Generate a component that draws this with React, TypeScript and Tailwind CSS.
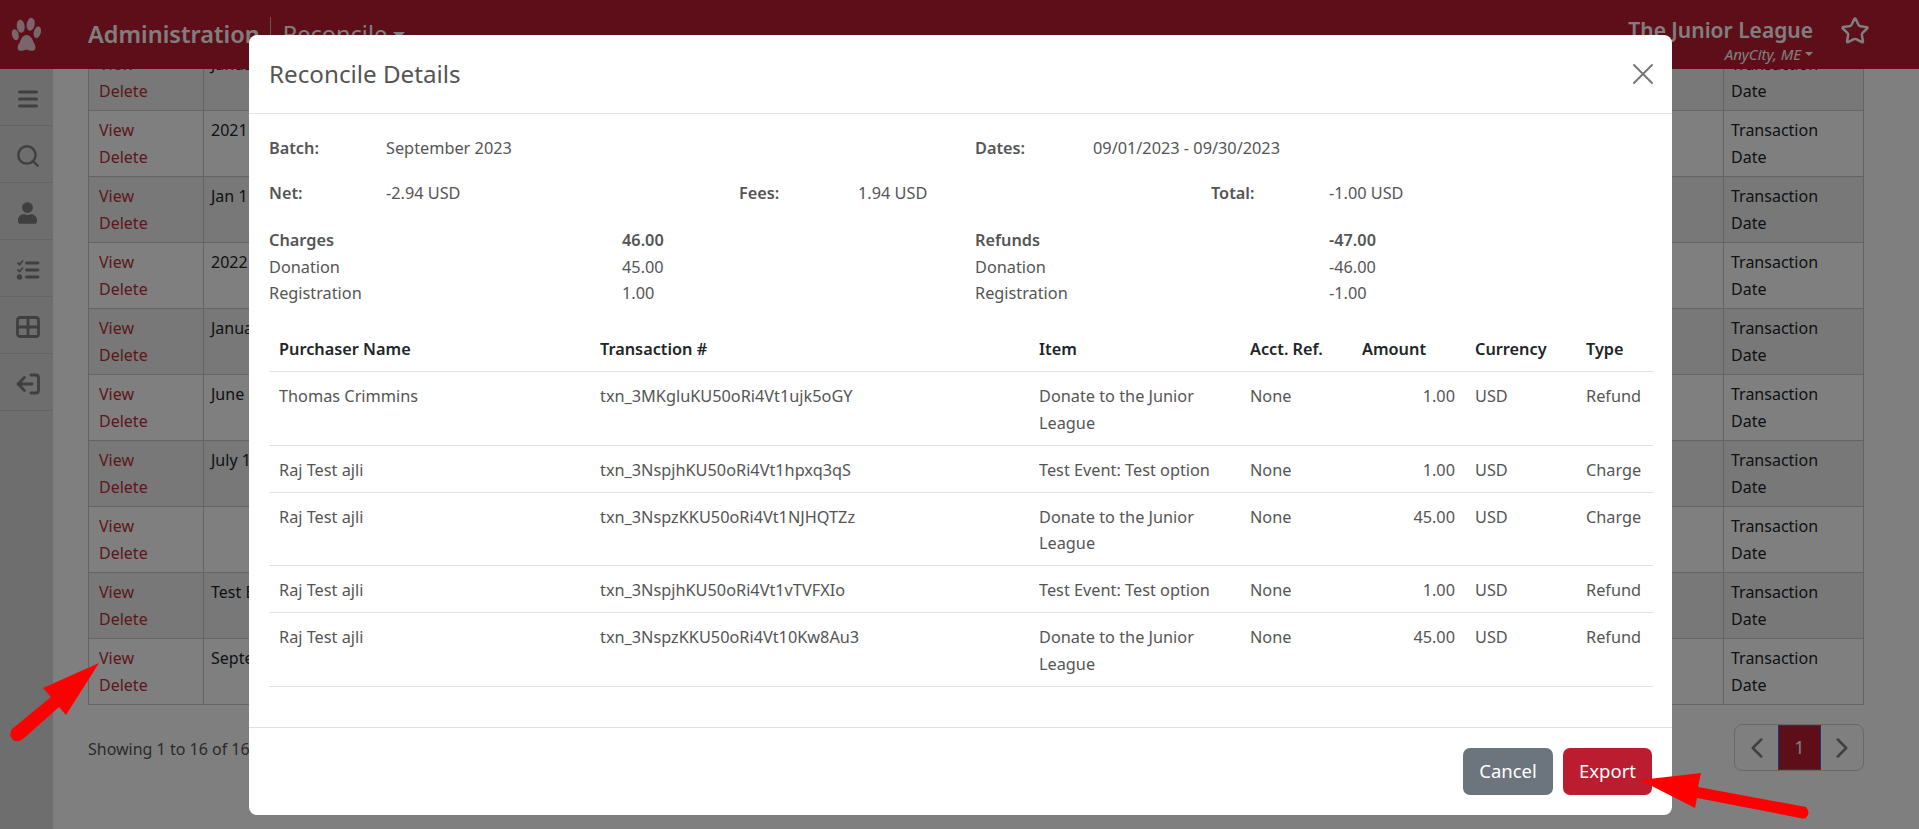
import { FaUser } from "react-icons/fa";
import { ChevronLeft, ChevronRight, Search, X, Star } from "lucide-react";

const font = "font-['Noto_Sans','Open_Sans',sans-serif]";

const pageRows = ["January 2021", "2021 Q1", "Jan 1 2022", "2022 Q1", "January 2023", "June 2023", "July 1 2023", "", "Test Batch", "September 2023"];

const txns = [
  ["Thomas Crimmins", "txn_3MKgluKU50oRi4Vt1ujk5oGY", "Donate to the Junior League", "None", "1.00", "USD", "Refund"],
  ["Raj Test ajli", "txn_3NspjhKU50oRi4Vt1hpxq3qS", "Test Event: Test option", "None", "1.00", "USD", "Charge"],
  ["Raj Test ajli", "txn_3NspzKKU50oRi4Vt1NJHQTZz", "Donate to the Junior League", "None", "45.00", "USD", "Charge"],
  ["Raj Test ajli", "txn_3NspjhKU50oRi4Vt1vTVFXIo", "Test Event: Test option", "None", "1.00", "USD", "Refund"],
  ["Raj Test ajli", "txn_3NspzKKU50oRi4Vt10Kw8Au3", "Donate to the Junior League", "None", "45.00", "USD", "Refund"],
];

function SideItem({ children }: { children: React.ReactNode }) {
  return <div className="h-[57px] pt-[3px] pl-[2px] flex items-center justify-center border-b border-[#c8c8c8] text-[#7f7f7f]">{children}</div>;
}

function Label({ children, w }: { children: React.ReactNode; w: string }) {
  return <span className={`font-semibold ${w}`}>{children}</span>;
}

export default function App() {
  return (
    <div className={`relative h-[829px] w-[1919px] overflow-hidden bg-white text-[16px] leading-[27px] text-[#212529] ${font}`}>
      <header className="relative z-10 h-[69px] bg-[#bc1c30] flex items-center text-white">
        <div className="w-[88px] h-[69px] shrink-0">
          <svg viewBox="0 0 50 69" width="50" height="69" fill="#f4ccd4">
            <ellipse cx="15.3" cy="34.7" rx="3.4" ry="5.6" transform="rotate(-15 15.3 34.7)" />
            <ellipse cx="20.7" cy="26.3" rx="4" ry="6.5" transform="rotate(-8 20.7 26.3)" />
            <ellipse cx="30.7" cy="24.3" rx="4" ry="6.5" transform="rotate(10 30.7 24.3)" />
            <ellipse cx="37.3" cy="32.3" rx="3.5" ry="6" transform="rotate(15 37.3 32.3)" />
            <path d="M26.5 35 C30 35 32 38 33.5 42 C35 45 36 47 35 49.5 C34 51.5 30 51 26.5 49.5 C23 51 19 51.5 18 49.5 C17 47 18 45 20 42 C21.5 38 23 35 26.5 35 Z" />
          </svg>
        </div>
        <span className="text-[23.5px] font-semibold">Administration</span>
        <span className="ml-[10px] h-[36px] w-px bg-white/60" />
        <span className="ml-[12px] text-[23.5px] flex items-center gap-[6px]">
          Reconcile
          <span className="w-0 h-0 border-x-[6px] border-x-transparent border-t-[6px] border-t-white" />
        </span>
        <div className="ml-auto flex flex-col items-end pr-[106px] mt-[10px]">
          <span className="text-[21px] leading-[28px] font-semibold">The Junior League</span>
          <span className="text-[15px] leading-[20px] italic flex items-center gap-1">
            AnyCity, ME
            <span className="w-0 h-0 border-x-[4px] border-x-transparent border-t-[4px] border-t-white" />
          </span>
        </div>
        <Star className="absolute left-[1840px] top-[16px] w-[30px] h-[30px]" strokeWidth={2} />
      </header>

      <div className="flex h-[760px]">
        <aside className="w-[53px] shrink-0 bg-[#dcdcdc]">
          <SideItem>
            <svg viewBox="0 0 20 18" className="w-[20px] h-[18px]" fill="none" stroke="#7f7f7f" strokeWidth="3" strokeLinecap="round">
              <path d="M1.5 2h17M1.5 9h17M1.5 16h17" />
            </svg>
          </SideItem>
          <SideItem><Search className="w-[26px] h-[26px] text-[#7f7f7f]" strokeWidth={2.2} /></SideItem>
          <SideItem><FaUser className="w-[19px] h-[22px] text-[#7f7f7f]" /></SideItem>
          <SideItem>
            <svg viewBox="0 0 24 24" className="w-[24px] h-[24px]" fill="none" stroke="#7f7f7f" strokeWidth="2.8" strokeLinecap="round" strokeLinejoin="round">
              <path d="M2 5l1.6 1.6L6.5 3M2 12l1.6 1.6L6.5 10" strokeWidth="1.8" />
              <path d="M10.5 5h11.5M10.5 12h11.5M10.5 19h11.5" />
              <circle cx="3.5" cy="19" r="1.3" fill="#7f7f7f" />
            </svg>
          </SideItem>
          <SideItem>
            <svg viewBox="0 0 24 22" className="w-[24px] h-[22px]" fill="none" stroke="#7f7f7f" strokeWidth="2.8" strokeLinejoin="round">
              <rect x="1.5" y="1.5" width="21" height="19" rx="2.5" />
              <path d="M1.5 11h21M12 1.5v19" />
            </svg>
          </SideItem>
          <SideItem>
            <svg viewBox="0 0 24 22" className="w-[24px] h-[22px]" fill="none" stroke="#7f7f7f" strokeWidth="2.8" strokeLinecap="round" strokeLinejoin="round">
              <path d="M15 2h5a2.5 2.5 0 0 1 2.5 2.5v13a2.5 2.5 0 0 1-2.5 2.5h-5" />
              <path d="M2 11h14M8.5 4.5L2 11l6.5 6.5" />
            </svg>
          </SideItem>
        </aside>

        <main className="flex-1 pl-[35px] pr-[55px] overflow-hidden">
          <table className="-mt-[25px] w-[1776px] border-collapse table-fixed">
            <tbody>
              {pageRows.map((r, i) => (
                <tr key={i} className={i % 2 === 0 ? "bg-[#f0f0f0]" : "bg-white"}>
                  <td className="w-[115px] h-[66px] border border-[#c8c8c8] px-[10px] pt-[6px] pb-[5px] align-top text-[#b83038]">
                    <div>View</div>
                    <div>Delete</div>
                  </td>
                  <td className="border border-[#c8c8c8] px-[7px] pt-[6px] pb-[5px] align-top">{r}</td>
                  <td className="w-[140px] border border-[#c8c8c8] px-[7px] pt-[6px] pb-[5px] align-top">Transaction Date</td>
                </tr>
              ))}
            </tbody>
          </table>
          <div className="flex items-center justify-between mt-[19px] h-[47px] w-[1776px]">
            <span className="text-[#555] pt-[4px]">Showing 1 to 16 of 16 entries</span>
            <div className="flex h-[47px] w-[130px] border border-[#d0d0d0] rounded-[8px] overflow-hidden text-[#808080]">
              <span className="w-[44px] flex items-center justify-center"><ChevronLeft className="w-[34px] h-[34px]" strokeWidth={1.8} /></span>
              <span className="w-[43px] flex items-center justify-center bg-[#bc1c30] text-white text-[18px] border border-[#1c78ff]">1</span>
              <span className="w-[43px] flex items-center justify-center"><ChevronRight className="w-[34px] h-[34px]" strokeWidth={1.8} /></span>
            </div>
          </div>
        </main>
      </div>

      <div className="absolute inset-0 z-20 bg-black/50" />

      <div className="absolute inset-0 z-30 flex justify-center pt-[35px] pl-[2px]">
        <div className="w-[1423px] h-[780px] bg-white rounded-[8px] flex flex-col text-[16.3px] leading-[26.5px] text-[#555]">
          <div className="h-[79px] shrink-0 border-b border-[#dee2e6] flex items-center justify-between pl-[20px] pr-[11px]">
            <h2 className="text-[24.2px] font-normal">Reconcile Details</h2>
            <X className="w-[36px] h-[36px] text-[#777]" strokeWidth={1.3} />
          </div>
          <div className="flex-1 pt-[21px] pl-[20px] pr-[19px]">
            <div className="flex h-[27px] mb-[18px]">
              <div className="w-[706px] flex"><Label w="w-[117px]">Batch:</Label><span>September 2023</span></div>
              <div className="flex"><Label w="w-[118px]">Dates:</Label><span>09/01/2023 - 09/30/2023</span></div>
            </div>
            <div className="flex h-[27px] mb-[20px]">
              <div className="w-[470px] flex"><Label w="w-[117px]">Net:</Label><span>-2.94 USD</span></div>
              <div className="w-[472px] flex"><Label w="w-[119px]">Fees:</Label><span>1.94 USD</span></div>
              <div className="flex"><Label w="w-[118px]">Total:</Label><span>-1.00 USD</span></div>
            </div>
            <div className="grid grid-cols-[353px_353px_354px_1fr] mb-[18px]">
              <span className="font-semibold">Charges</span><span className="font-semibold">46.00</span>
              <span className="font-semibold">Refunds</span><span className="font-semibold">-47.00</span>
              <span>Donation</span><span>45.00</span><span>Donation</span><span>-46.00</span>
              <span>Registration</span><span>1.00</span><span>Registration</span><span>-1.00</span>
            </div>
            <table className="w-[1384px] table-fixed border-collapse">
              <thead>
                <tr className="h-[47px] border-b border-[#dee2e6] text-[#212529]">
                  <th className="w-[321px] px-[10px] pt-[3px] text-left font-semibold">Purchaser Name</th>
                  <th className="w-[439px] px-[10px] pt-[3px] text-left font-semibold">Transaction #</th>
                  <th className="w-[211px] px-[10px] pt-[3px] text-left font-semibold">Item</th>
                  <th className="w-[112px] px-[10px] pt-[3px] text-left font-semibold">Acct. Ref.</th>
                  <th className="w-[113px] px-[10px] pt-[3px] text-left font-semibold">Amount</th>
                  <th className="w-[111px] px-[10px] pt-[3px] text-left font-semibold">Currency</th>
                  <th className="w-[77px] px-[10px] pt-[3px] text-left font-semibold">Type</th>
                </tr>
              </thead>
              <tbody>
                {txns.map((t, i) => (
                  <tr key={i} className="border-b border-[#dee2e6] align-top">
                    {t.map((c, j) => (
                      <td key={j} className={`px-[10px] pt-[11px] pb-[8.6px] ${j === 4 ? "text-right" : ""}`}>{c}</td>
                    ))}
                  </tr>
                ))}
              </tbody>
            </table>
          </div>
          <div className="h-[88px] shrink-0 border-t border-[#dee2e6] flex items-start justify-end gap-[10px] pt-[20px] pr-[20px]">
            <button className="w-[90px] h-[47px] rounded-[7px] bg-[#6c757d] text-white text-[18.5px]">Cancel</button>
            <button className="w-[89px] h-[47px] rounded-[7px] bg-[#bc1c30] text-white text-[18.5px]">Export</button>
          </div>
        </div>
      </div>

      <svg className="absolute inset-0 z-40 pointer-events-none" width="1919" height="829" fill="#ff0000">
        <path d="M99 663 L43 688 L51 697 L12 729 Q8 735 13 740 Q18 743 23 739 L59 707 L66 715 Z" />
        <path d="M1640 780 L1701 773 L1698 787 L1806 807 Q1811 813 1806 818 Q1803 819 1800 818 L1697 798 L1695 808 Z" />
      </svg>
    </div>
  );
}
